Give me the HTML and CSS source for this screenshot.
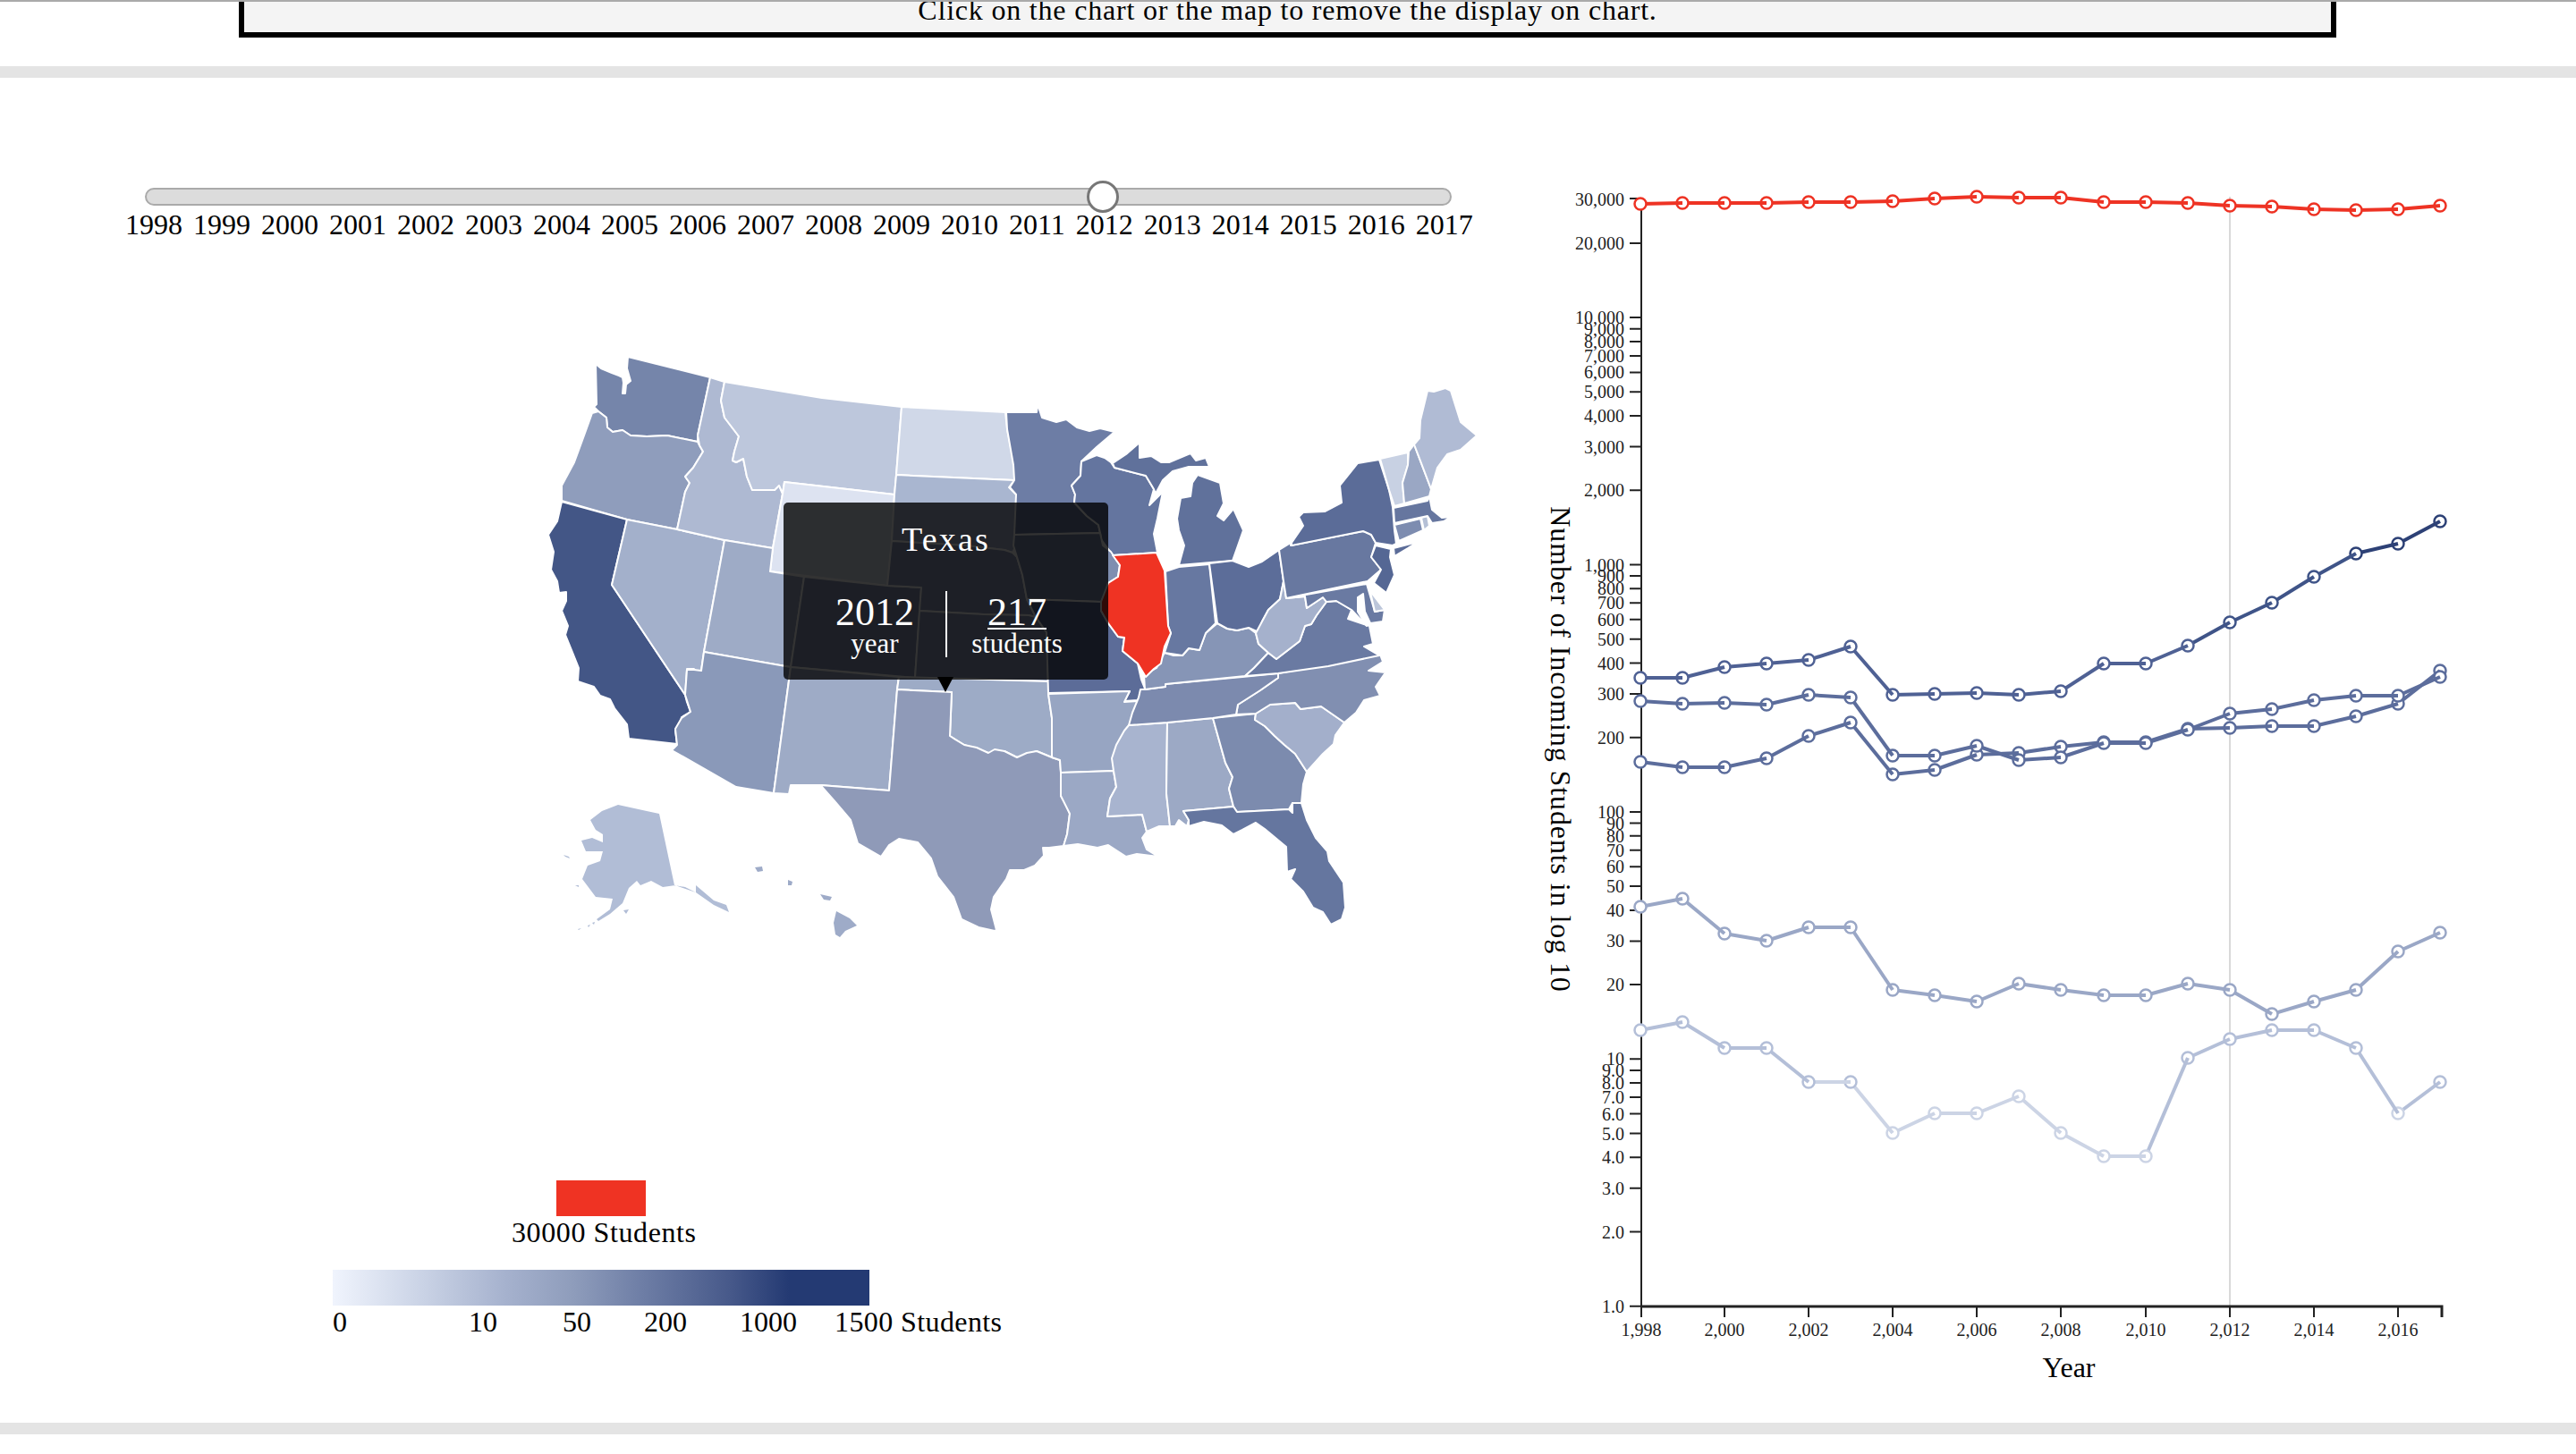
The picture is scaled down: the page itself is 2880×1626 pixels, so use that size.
FILE: index.html
```html
<!DOCTYPE html>
<html lang="en">
<head>
<meta charset="utf-8">
<title>Incoming Students</title>
<link rel="stylesheet" href="styles.css">
</head>
<body>
<div class="top-rule"></div>
<div class="notice"><p class="notice-text">Click on the chart or the map to remove the display on chart.</p></div>
<div class="band band-first"></div>
<main class="main">
  <section class="left">
    <input class="slider" type="range" min="1998" max="2017" step="0.01" value="2012.05" aria-label="Year">
    <div class="years">
      <span>1998</span><span>1999</span><span>2000</span><span>2001</span><span>2002</span><span>2003</span><span>2004</span><span>2005</span><span>2006</span><span>2007</span><span>2008</span><span>2009</span><span>2010</span><span>2011</span><span>2012</span><span>2013</span><span>2014</span><span>2015</span><span>2016</span><span>2017</span>
    </div>
    <div class="map-wrap">
      <svg class="map" viewBox="600 380 1060 700" width="1060" height="700">
        <path class="wa" d="M666 407L672 412L684 417L692 420L696 422L697 428L696 440L699 440L700 430L705 426L701 412L702 399L794 422L780 487L780 494L746 487L723 488L705 487L696 481L685 483L679 478L678 467L669 460L664 455L667 452Z"/>
        <path class="or" d="M662 462L669 460L678 467L679 478L685 483L696 481L705 487L723 488L746 487L780 494L782 498L786 505L775 523L766 533L771 540L766 550L757 592L701 581L628 560L628 543L642 517L653 487Z"/>
        <path class="ca" d="M628 561L701 581L684 654L766 777L768 785L772 796L762 802L760 813L755 817L757 832L703 826L701 810L687 792L682 782L671 778L664 768L646 762L647 747L639 727L632 710L635 700L628 683L633 672L633 662L625 663L623 650L616 637L619 617L613 598L623 583Z"/>
        <path class="nv" d="M701 581L757 592L810 604L787 729L784 750L780 753L776 748L768 748L766 777L684 654Z"/>
        <path class="id" d="M794 422L810 427L806 448L810 467L826 488L821 505L819 515L823 517L831 513L835 533L841 548L866 548L871 543L875 552L864 613L810 604L757 592L766 550L771 540L766 533L775 523L786 505L782 498L780 487Z"/>
        <path class="mt" d="M810 427L919 445L1008 455L1002 531L1000 553L877 539L875 552L871 543L866 548L841 548L835 533L831 513L823 517L819 515L821 505L826 488L810 467L806 448Z"/>
        <path class="wy" d="M877 539L1000 553L997 605L992 655L861 639L864 613L875 552Z"/>
        <path class="ut" d="M810 604L864 613L861 639L899 645L884 746L787 729Z"/>
        <path class="co" d="M899 645L992 655L1030 657L1023 758L884 746Z"/>
        <path class="az" d="M787 729L884 746L865 887L823 880L751 839L757 833L755 815L762 803L772 796L766 777L768 749L776 749L784 750Z"/>
        <path class="nm" d="M884 746L1005 757L1003 771L994 884L918 878L884 878L882 888L865 887Z"/>
        <path class="nd" d="M1008 455L1124 461L1126 480L1134 520L1134 537L1002 531Z"/>
        <path class="sd" d="M1002 531L1134 537L1128 545L1136 553L1136 597L1134 600L1136 610L1132 618L1123 615L1080 610L997 605L1000 553Z"/>
        <path class="ne" d="M997 605L1080 610L1123 615L1132 618L1137 623L1143 643L1148 670L1158 690L1150 688L1100 687L1028 683L1030 657L992 655Z"/>
        <path class="ks" d="M1028 683L1100 687L1150 688L1158 690L1170 707L1172 762L1023 758Z"/>
        <path class="ok" d="M1005 757L1172 762L1172 775L1176 803L1176 847L1159 840L1137 847L1123 840L1105 842L1078 833L1062 823L1064 774L1003 771Z"/>
        <path class="tx" d="M1003 771L1064 774L1062 823L1068 827L1078 833L1092 836L1105 842L1112 838L1123 840L1137 847L1148 842L1159 840L1176 847L1185 850L1186 864L1186 890L1192 900L1196 910L1193 933L1189 946L1173 948L1166 948L1167 957L1157 968L1145 973L1129 973L1125 983L1111 1003L1108 1017L1114 1040L1112 1041L1094 1037L1075 1028L1066 1003L1048 980L1041 960L1026 942L1005 938L994 945L985 958L959 943L951 917L934 897L919 880L917 878L994 884Z"/>
        <path class="mn" d="M1125 461L1159 461L1160 452L1165 467L1181 472L1192 469L1204 478L1218 482L1230 479L1246 483L1226 500L1209 516L1208 532L1198 543L1202 553L1201 562L1215 577L1228 587L1230 596L1134 598L1136 553L1129 545L1134 537L1133 520L1126 480Z"/>
        <path class="wi" d="M1209 516L1226 509L1235 512L1242 517L1246 523L1281 532L1290 547L1285 565L1300 550L1294 580L1290 597L1294 618L1244 621L1231 603L1230 596L1228 587L1215 577L1201 562L1202 553L1198 543L1208 532Z"/>
        <path class="mi" d="M1244 518L1259 508L1274 495L1274 512L1287 510L1298 517L1307 517L1331 507L1337 515L1348 512L1352 522L1329 522L1311 527L1300 537L1292 552L1290 547L1281 532L1246 523Z"/>
        <path class="mi" d="M1339 531L1364 540L1368 563L1361 577L1368 582L1379 569L1390 593L1383 613L1378 627L1318 632L1324 610L1318 593L1316 580L1320 557L1331 555L1333 540Z"/>
        <path class="ia" d="M1134 598L1230 596L1233 610L1242 617L1252 632L1250 645L1239 652L1236 662L1231 673L1148 670L1143 643L1137 623L1133 610Z"/>
        <path class="mo" d="M1148 670L1231 673L1231 683L1239 697L1250 712L1257 713L1255 728L1272 742L1276 760L1280 770L1272 783L1257 784L1263 773L1172 775L1170 707L1158 690Z"/>
        <path class="ar" d="M1172 776L1263 773L1257 785L1272 784L1263 810L1250 832L1244 848L1248 862L1186 864L1185 850L1176 847L1176 803Z"/>
        <path class="la" d="M1186 864L1245 862L1248 880L1241 893L1238 913L1277 911L1282 930L1277 937L1282 950L1295 958L1271 955L1259 958L1239 945L1227 948L1205 944L1189 946L1193 933L1196 910L1186 890Z"/>
        <path class="ms" d="M1262 811L1305 808L1304 887L1308 924L1296 924L1282 930L1277 911L1238 913L1241 893L1248 880L1245 862L1243 848L1248 833L1257 817Z"/>
        <path class="al" d="M1305 808L1356 803L1370 853L1378 869L1374 882L1379 902L1323 907L1329 917L1327 924L1318 917L1314 924L1308 924L1304 887Z"/>
        <path class="ga" d="M1356 803L1404 798L1403 805L1414 812L1425 823L1436 833L1448 843L1461 863L1457 877L1455 898L1445 898L1441 905L1383 908L1379 902L1374 882L1378 869L1370 853Z"/>
        <path class="fl" d="M1323 907L1379 902L1383 908L1441 905L1445 909L1445 898L1455 898L1461 917L1471 937L1484 952L1486 963L1502 987L1504 1015L1500 1028L1488 1034L1479 1020L1468 1015L1457 997L1443 983L1448 972L1439 975L1438 947L1414 927L1404 920L1389 928L1379 933L1366 923L1346 919L1329 924L1329 917Z"/>
        <path class="sc" d="M1404 798L1420 788L1448 786L1454 793L1477 790L1503 808L1493 822L1491 832L1479 843L1461 863L1448 843L1436 833L1425 823L1414 812L1403 805Z"/>
        <path class="nc" d="M1429 753L1543 732L1546 740L1530 750L1549 752L1538 768L1543 778L1525 783L1516 797L1503 808L1477 790L1454 793L1448 786L1420 788L1404 798L1382 799L1384 788L1409 772L1429 758Z"/>
        <path class="tn" d="M1280 771L1303 768L1303 765L1389 757L1429 753L1429 758L1409 772L1384 788L1382 799L1356 803L1305 808L1262 811L1266 797L1273 780L1275 771Z"/>
        <path class="ky" d="M1279 755L1293 747L1298 737L1302 730L1312 733L1322 733L1329 725L1341 727L1348 708L1361 697L1372 703L1383 705L1396 702L1404 708L1407 720L1418 730L1402 747L1392 756L1303 765L1303 768L1280 771Z"/>
        <path class="in" d="M1303 639L1318 634L1352 631L1359 697L1348 708L1341 727L1329 725L1322 733L1302 730L1309 708L1306 700Z"/>
        <path class="oh" d="M1352 630L1378 627L1396 634L1411 628L1430 615L1435 650L1431 670L1418 682L1411 695L1407 707L1396 702L1383 705L1372 703L1361 697Z"/>
        <path class="va" d="M1392 756L1402 747L1418 730L1427 737L1440 727L1453 717L1459 700L1466 698L1472 688L1483 673L1494 672L1511 682L1507 692L1531 700L1535 720L1525 723L1542 733L1485 745L1429 753Z"/>
        <path class="wv" d="M1435 650L1438 669L1459 667L1461 680L1479 668L1483 673L1472 688L1466 698L1459 700L1453 717L1440 727L1427 737L1418 730L1407 720L1404 708L1411 695L1418 682L1431 670Z"/>
        <path class="md" d="M1438 669L1528 653L1537 684L1548 682L1546 695L1532 697L1526 684L1524 664L1518 668L1518 684L1528 700L1511 682L1494 672L1483 673L1479 668L1461 680L1459 667Z"/>
        <path class="de" d="M1530 653L1535 665L1548 682L1537 684Z"/>
        <path class="pa" d="M1443 610L1524 594L1533 598L1538 607L1533 623L1544 637L1529 650L1438 669L1435 650L1430 615L1443 607Z"/>
        <path class="ny" d="M1444 607L1457 588L1452 578L1457 573L1481 572L1500 562L1498 543L1518 518L1542 514L1553 548L1557 567L1559 593L1561 608L1557 610L1538 607L1533 598L1524 594L1444 610Z"/>
        <path class="ny" d="M1558 613L1585 606L1574 613L1559 622Z"/>
        <path class="nj" d="M1538 610L1555 614L1554 623L1559 643L1550 663L1536 652L1544 637L1533 623Z"/>
        <path class="ct" d="M1559 587L1588 580L1591 593L1564 605Z"/>
        <path class="ri" d="M1589 579L1596 577L1598 588L1592 593Z"/>
        <path class="ma" d="M1558 568L1596 560L1598 555L1601 570L1612 579L1622 578L1614 583L1601 585L1596 577L1559 585Z"/>
        <path class="vt" d="M1543 513L1574 506L1574 520L1568 540L1570 563L1559 566L1553 548Z"/>
        <path class="nh" d="M1575 505L1581 497L1600 547L1598 555L1570 563L1568 540L1574 520Z"/>
        <path class="me" d="M1581 497L1587 490L1588 470L1596 437L1603 438L1616 434L1622 437L1633 472L1651 487L1633 503L1618 508L1607 523L1600 547Z"/>
        <path class="il" d="M1244 621L1293 618L1302 638L1306 700L1309 708L1302 723L1298 742L1290 748L1281 757L1272 742L1255 728L1257 713L1250 712L1239 697L1231 683L1231 673L1239 652L1250 645L1252 632Z"/>
        <path class="ak" d="M660 917L673 907L691 900L723 907L737 910L754 990L766 992L778 998L778 990L798 1007L812 1012L815 1020L798 1012L778 998L755 990L741 992L728 985L716 990L712 985L703 993L696 1010L682 1022L669 1030L667 1028L682 1017L685 1005L666 1003L651 983L657 968L671 963L674 952L655 952L650 940L662 937L674 942L674 933L666 928Z"/>
        <path class="ak" d="M697 1018L703 1017L700 1022ZM662 1032L665 1031L664 1034ZM657 1035L660 1034L658 1037ZM646 1039L650 1038L647 1040ZM630 956L636 958L637 960L632 958ZM643 990L647 990L647 992Z"/>
        <path class="hi" d="M844 970L852 969L853 974L847 975Z"/>
        <path class="hi" d="M881 984L886 986L885 990L881 990Z"/>
        <path class="hi" d="M917 1000L930 1003L928 1007L921 1006Z"/>
        <path class="hi" d="M935 1019L950 1027L958 1035L945 1041L939 1048L934 1045L932 1032Z"/>
      </svg>
      <div class="tip">
        <div class="tip-title">Texas</div>
        <div class="tip-stats">
          <div class="stat"><div class="stat-num">2012</div><div class="stat-lab">year</div></div>
          <div class="tip-rule"></div>
          <div class="stat stat-right"><div class="stat-num stat-under">217</div><div class="stat-lab">students</div></div>
        </div>
      </div>
    </div>
    <div class="red-key"></div>
    <div class="red-label">30000 Students</div>
    <div class="grad-key"></div>
    <div class="grad-labels"><span>0</span><span class="t10">10</span><span class="t50">50</span><span class="t200">200</span><span class="t1000">1000</span><span class="t1500">1500 Students</span></div>
  </section>
  <section class="right">
    <svg class="chart" viewBox="1700 87 1180 1504" width="1180" height="1504">
      <path class="grid" d="M2493 220V1461"/>
      <path class="axis-y" d="M1822 222H1835V1461"/>
      <path class="axis-x" d="M1835 1461H2730V1473"/>
      <path class="ticks" d="M1822 1377.5h12M1822 1328.8h12M1822 1294.3h12M1822 1267.5h12M1822 1245.6h12M1822 1227.1h12M1822 1211.1h12M1822 1196.9h12M1822 1184.3h12M1822 1101.1h12M1822 1052.4h12M1822 1017.9h12M1822 991.1h12M1822 969.2h12M1822 950.7h12M1822 934.7h12M1822 920.5h12M1822 907.9h12M1822 824.7h12M1822 776h12M1822 741.5h12M1822 714.7h12M1822 692.8h12M1822 674.3h12M1822 658.3h12M1822 644.1h12M1822 631.5h12M1822 548.3h12M1822 499.6h12M1822 465.1h12M1822 438.3h12M1822 416.4h12M1822 397.9h12M1822 381.9h12M1822 367.7h12M1822 355.1h12M1822 271.9h12M1822 1460.7h12M1835 1461v12M1928 1461v12M2022 1461v12M2116 1461v12M2210 1461v12M2304 1461v12M2399 1461v12M2493 1461v12M2587 1461v12M2681 1461v12"/>
      <g class="ylabels">
        <text x="1816" y="1463">1.0</text><text x="1816" y="1380">2.0</text><text x="1816" y="1331">3.0</text><text x="1816" y="1296">4.0</text><text x="1816" y="1270">5.0</text><text x="1816" y="1248">6.0</text><text x="1816" y="1229">7.0</text><text x="1816" y="1213">8.0</text><text x="1816" y="1199">9.0</text><text x="1816" y="1186">10</text>
        <text x="1816" y="1103">20</text><text x="1816" y="1054">30</text><text x="1816" y="1020">40</text><text x="1816" y="993">50</text><text x="1816" y="971">60</text><text x="1816" y="953">70</text><text x="1816" y="937">80</text><text x="1816" y="923">90</text><text x="1816" y="910">100</text>
        <text x="1816" y="827">200</text><text x="1816" y="778">300</text><text x="1816" y="744">400</text><text x="1816" y="717">500</text><text x="1816" y="695">600</text><text x="1816" y="676">700</text><text x="1816" y="660">800</text><text x="1816" y="646">900</text><text x="1816" y="634">1,000</text>
        <text x="1816" y="550">2,000</text><text x="1816" y="502">3,000</text><text x="1816" y="467">4,000</text><text x="1816" y="440">5,000</text><text x="1816" y="418">6,000</text><text x="1816" y="400">7,000</text><text x="1816" y="384">8,000</text><text x="1816" y="370">9,000</text><text x="1816" y="357">10,000</text><text x="1816" y="274">20,000</text><text x="1816" y="225">30,000</text>
      </g>
      <g class="xlabels">
        <text x="1835" y="1494">1,998</text><text x="1928" y="1494">2,000</text><text x="2022" y="1494">2,002</text><text x="2116" y="1494">2,004</text><text x="2210" y="1494">2,006</text><text x="2304" y="1494">2,008</text><text x="2399" y="1494">2,010</text><text x="2493" y="1494">2,012</text><text x="2587" y="1494">2,014</text><text x="2681" y="1494">2,016</text>
      </g>
      <text class="axis-title" x="2313" y="1540">Year</text>
      <text class="axis-title axis-title-y" transform="translate(1734 838) rotate(90)">Number of Incoming Students in log 10</text>

      <g class="s-e">
        <circle cx="2728" cy="1210"/><path d="M2681 1245L2728 1210"/><circle class="lt" cx="2681" cy="1245"/><path d="M2634 1172L2681 1245"/><circle cx="2634" cy="1172"/><path d="M2587 1152L2634 1172"/><circle cx="2587" cy="1152"/><path d="M2540 1152L2587 1152"/><circle cx="2540" cy="1152"/><path d="M2493 1162L2540 1152"/><circle cx="2493" cy="1162"/><path d="M2446 1183L2493 1162"/><circle cx="2446" cy="1183"/><path d="M2399 1293L2446 1183"/><circle class="lt" cx="2399" cy="1293"/><path class="lt" d="M2352 1293L2399 1293"/><circle class="lt" cx="2352" cy="1293"/><path class="lt" d="M2304 1267L2352 1293"/><circle class="lt" cx="2304" cy="1267"/><path class="lt" d="M2257 1226L2304 1267"/><circle class="lt" cx="2257" cy="1226"/><path class="lt" d="M2210 1245L2257 1226"/><circle class="lt" cx="2210" cy="1245"/><path class="lt" d="M2163 1245L2210 1245"/><circle class="lt" cx="2163" cy="1245"/><path class="lt" d="M2116 1267L2163 1245"/><circle class="lt" cx="2116" cy="1267"/><path class="lt" d="M2069 1210L2116 1267"/><circle cx="2069" cy="1210"/><path class="lt" d="M2022 1210L2069 1210"/><circle cx="2022" cy="1210"/><path d="M1975 1172L2022 1210"/><circle cx="1975" cy="1172"/><path d="M1928 1172L1975 1172"/><circle cx="1928" cy="1172"/><path d="M1881 1143L1928 1172"/><circle cx="1881" cy="1143"/><path d="M1834 1152L1881 1143"/><circle cx="1834" cy="1152"/>
      </g>
      <g class="s-d">
        <circle cx="2728" cy="1043"/><path d="M2681 1064L2728 1043"/><circle cx="2681" cy="1064"/><path d="M2634 1107L2681 1064"/><circle cx="2634" cy="1107"/><path d="M2587 1120L2634 1107"/><circle cx="2587" cy="1120"/><path d="M2540 1134L2587 1120"/><circle cx="2540" cy="1134"/><path d="M2493 1107L2540 1134"/><circle cx="2493" cy="1107"/><path d="M2446 1100L2493 1107"/><circle cx="2446" cy="1100"/><path d="M2399 1113L2446 1100"/><circle cx="2399" cy="1113"/><path d="M2352 1113L2399 1113"/><circle cx="2352" cy="1113"/><path d="M2304 1107L2352 1113"/><circle cx="2304" cy="1107"/><path d="M2257 1100L2304 1107"/><circle cx="2257" cy="1100"/><path d="M2210 1120L2257 1100"/><circle cx="2210" cy="1120"/><path d="M2163 1113L2210 1120"/><circle cx="2163" cy="1113"/><path d="M2116 1107L2163 1113"/><circle cx="2116" cy="1107"/><path d="M2069 1037L2116 1107"/><circle cx="2069" cy="1037"/><path d="M2022 1037L2069 1037"/><circle cx="2022" cy="1037"/><path d="M1975 1052L2022 1037"/><circle cx="1975" cy="1052"/><path d="M1928 1044L1975 1052"/><circle cx="1928" cy="1044"/><path d="M1881 1005L1928 1044"/><circle cx="1881" cy="1005"/><path d="M1834 1014L1881 1005"/><circle cx="1834" cy="1014"/>
      </g>
      <g class="s-c">
        <circle cx="2728" cy="750"/><path d="M2681 787L2728 750"/><circle cx="2681" cy="787"/><path d="M2634 801L2681 787"/><circle cx="2634" cy="801"/><path d="M2587 812L2634 801"/><circle cx="2587" cy="812"/><path d="M2540 812L2587 812"/><circle cx="2540" cy="812"/><path d="M2493 814L2540 812"/><circle cx="2493" cy="814"/><path d="M2446 815L2493 814"/><circle cx="2446" cy="815"/><path d="M2399 830L2446 815"/><circle cx="2399" cy="830"/><path d="M2352 830L2399 830"/><circle cx="2352" cy="830"/><path d="M2304 835L2352 830"/><circle cx="2304" cy="835"/><path d="M2257 842L2304 835"/><circle cx="2257" cy="842"/><path d="M2210 844L2257 842"/><circle cx="2210" cy="844"/><path d="M2163 861L2210 844"/><circle cx="2163" cy="861"/><path d="M2116 866L2163 861"/><circle cx="2116" cy="866"/><path d="M2069 808L2116 866"/><circle cx="2069" cy="808"/><path d="M2022 823L2069 808"/><circle cx="2022" cy="823"/><path d="M1975 848L2022 823"/><circle cx="1975" cy="848"/><path d="M1928 858L1975 848"/><circle cx="1928" cy="858"/><path d="M1881 858L1928 858"/><circle cx="1881" cy="858"/><path d="M1834 852L1881 858"/><circle cx="1834" cy="852"/>
      </g>
      <g class="s-b">
        <circle cx="2728" cy="757"/><path d="M2681 778L2728 757"/><circle cx="2681" cy="778"/><path d="M2634 778L2681 778"/><circle cx="2634" cy="778"/><path d="M2587 783L2634 778"/><circle cx="2587" cy="783"/><path d="M2540 793L2587 783"/><circle cx="2540" cy="793"/><path d="M2493 798L2540 793"/><circle cx="2493" cy="798"/><path d="M2446 816L2493 798"/><circle cx="2446" cy="816"/><path d="M2399 831L2446 816"/><circle cx="2399" cy="831"/><path d="M2352 831L2399 831"/><circle cx="2352" cy="831"/><path d="M2304 847L2352 831"/><circle cx="2304" cy="847"/><path d="M2257 850L2304 847"/><circle cx="2257" cy="850"/><path d="M2210 834L2257 850"/><circle cx="2210" cy="834"/><path d="M2163 845L2210 834"/><circle cx="2163" cy="845"/><path d="M2116 845L2163 845"/><circle cx="2116" cy="845"/><path d="M2069 780L2116 845"/><circle cx="2069" cy="780"/><path d="M2022 777L2069 780"/><circle cx="2022" cy="777"/><path d="M1975 788L2022 777"/><circle cx="1975" cy="788"/><path d="M1928 786L1975 788"/><circle cx="1928" cy="786"/><path d="M1881 787L1928 786"/><circle cx="1881" cy="787"/><path d="M1834 784L1881 787"/><circle cx="1834" cy="784"/>
      </g>
      <g class="s-a">
        <g class="dk"><circle cx="2728" cy="583"/><path d="M2681 608L2728 583"/><circle cx="2681" cy="608"/><path d="M2634 619L2681 608"/><circle cx="2634" cy="619"/></g>
        <g class="md2"><path d="M2587 645L2634 619"/><circle cx="2587" cy="645"/><path d="M2540 674L2587 645"/><circle cx="2540" cy="674"/><path d="M2493 696L2540 674"/><circle cx="2493" cy="696"/><path d="M2446 722L2493 696"/></g>
        <circle cx="2446" cy="722"/><path d="M2399 742L2446 722"/><circle cx="2399" cy="742"/><path d="M2352 742L2399 742"/><circle cx="2352" cy="742"/><path d="M2304 773L2352 742"/><circle cx="2304" cy="773"/><path d="M2257 777L2304 773"/><circle cx="2257" cy="777"/><path d="M2210 775L2257 777"/><circle cx="2210" cy="775"/><path d="M2163 776L2210 775"/><circle cx="2163" cy="776"/><path d="M2116 777L2163 776"/><circle cx="2116" cy="777"/><path d="M2069 723L2116 777"/><circle cx="2069" cy="723"/><path d="M2022 738L2069 723"/><circle cx="2022" cy="738"/><path d="M1975 742L2022 738"/><circle cx="1975" cy="742"/><path d="M1928 746L1975 742"/><circle cx="1928" cy="746"/><path d="M1881 758L1928 746"/><circle cx="1881" cy="758"/><path d="M1834 758L1881 758"/><circle cx="1834" cy="758"/>
      </g>
      <g class="s-r">
        <circle cx="2728" cy="230"/><path d="M2681 234L2728 230"/><circle cx="2681" cy="234"/><path d="M2634 235L2681 234"/><circle cx="2634" cy="235"/><path d="M2587 234L2634 235"/><circle cx="2587" cy="234"/><path d="M2540 231L2587 234"/><circle cx="2540" cy="231"/><path d="M2493 230L2540 231"/><circle cx="2493" cy="230"/><path d="M2446 227L2493 230"/><circle cx="2446" cy="227"/><path d="M2399 226L2446 227"/><circle cx="2399" cy="226"/><path d="M2352 226L2399 226"/><circle cx="2352" cy="226"/><path d="M2304 221L2352 226"/><circle cx="2304" cy="221"/><path d="M2257 221L2304 221"/><circle cx="2257" cy="221"/><path d="M2210 220L2257 221"/><circle cx="2210" cy="220"/><path d="M2163 222L2210 220"/><circle cx="2163" cy="222"/><path d="M2116 225L2163 222"/><circle cx="2116" cy="225"/><path d="M2069 226L2116 225"/><circle cx="2069" cy="226"/><path d="M2022 226L2069 226"/><circle cx="2022" cy="226"/><path d="M1975 227L2022 226"/><circle cx="1975" cy="227"/><path d="M1928 227L1975 227"/><circle cx="1928" cy="227"/><path d="M1881 227L1928 227"/><circle cx="1881" cy="227"/><path d="M1834 228L1881 227"/><circle cx="1834" cy="228"/>
      </g>
    </svg>
  </section>
</main>
<div class="band"></div>
</body>
</html>
```

FILE: styles.css
```css
html, body {
  margin: 0;
  padding: 0;
  background: #fff;
  overflow: hidden;
}
body {
  width: 2880px;
  height: 1626px;
  font-family: "Liberation Serif", serif;
  font-size: 32px;
  color: #000;
}
.top-rule {
  height: 2px;
  background: #aaa;
}
.notice {
  width: 2345px;
  height: 40px;
  margin-left: 267px;
  box-sizing: border-box;
  border: 6px solid #000;
  border-top: 0;
  background: #f4f4f4;
  overflow: hidden;
}
.notice-text {
  margin: -9px 0 0;
  line-height: 36px;
  text-align: center;
  letter-spacing: 0.8px;
}
.band {
  height: 13px;
  background: #e4e4e4;
}
.band-first {
  margin-top: 32px;
}
.main {
  display: flex;
  height: 1504px;
}
.left {
  width: 1700px;
  flex: none;
}
.right {
  width: 1180px;
  flex: none;
}
.slider {
  display: block;
  -webkit-appearance: none;
  appearance: none;
  box-sizing: border-box;
  width: 1461px;
  height: 20px;
  margin: 123px 0 0 162px;
  padding: 0;
  background: #dcdcdc;
  border: 2px solid #aaa;
  border-radius: 10px;
  outline: none;
}
.slider::-webkit-slider-thumb {
  -webkit-appearance: none;
  appearance: none;
  box-sizing: border-box;
  width: 36px;
  height: 36px;
  border-radius: 50%;
  background: #fff;
  border: 3px solid #777;
}
.years {
  display: flex;
  justify-content: space-between;
  width: 1507px;
  margin: 3px 0 0 140px;
  line-height: 36px;
}
.map-wrap {
  position: relative;
  width: 1060px;
  height: 700px;
  margin: 111px 0 0 600px;
}
.map {
  display: block;
}
.map path {
  stroke: #fff;
  stroke-width: 2px;
  stroke-linejoin: round;
}
.wa { fill: #7585aa; }
.or { fill: #8f9dbc; }
.ca { fill: #435686; }
.nv { fill: #a3b0cb; }
.id { fill: #aeb9d2; }
.mt { fill: #bdc7dc; }
.wy { fill: #dde3f1; }
.ut { fill: #9eabc6; }
.az { fill: #8a99b9; }
.nm { fill: #9eabc6; }
.co { fill: #8a98b8; }
.nd { fill: #d0d8e8; }
.sd { fill: #a9b6d0; }
.ne { fill: #8f9dbc; }
.ks { fill: #8f9dbc; }
.ok { fill: #9dabc6; }
.tx { fill: #8f9ab8; }
.ar { fill: #97a5c2; }
.la { fill: #9ba8c5; }
.ms { fill: #a8b4cf; }
.al { fill: #9ca9c5; }
.ga { fill: #7c8bae; }
.fl { fill: #65769f; }
.sc { fill: #a3afcb; }
.nc { fill: #818fb1; }
.tn { fill: #7c8aae; }
.ky { fill: #8695b6; }
.va { fill: #6a7aa2; }
.wv { fill: #a5b1cc; }
.oh { fill: #5c6d99; }
.in { fill: #6778a1; }
.il { fill: #ef3323; }
.mi { fill: #60719b; }
.wi { fill: #64759f; }
.mn { fill: #6d7da5; }
.ia { fill: #7f8eb0; }
.mo { fill: #5c6c98; }
.pa { fill: #6878a0; }
.ny { fill: #5b6c98; }
.nj { fill: #556794; }
.ct { fill: #7d8cb0; }
.ri { fill: #b5c0d6; }
.ma { fill: #66769f; }
.vt { fill: #c8d1e3; }
.nh { fill: #9aa7c4; }
.me { fill: #b0bbd4; }
.md { fill: #6a7aa2; }
.de { fill: #bcc6da; }
.ak { fill: #b1bdd6; }
.map .ak, .map .hi { stroke: none; }
.hi { fill: #9eabc8; }
.tip {
  position: absolute;
  left: 276px;
  top: 182px;
  width: 363px;
  height: 198px;
  box-sizing: border-box;
  padding-top: 19px;
  background: rgba(0, 0, 0, 0.8);
  border-radius: 5px;
  color: #fff;
  text-align: center;
}
.tip::after {
  content: "";
  position: absolute;
  left: 172px;
  top: 195px;
  border-style: solid;
  border-width: 17px 9px 0;
  border-color: #000 transparent transparent;
}
.tip-title {
  font-size: 38px;
  line-height: 44px;
  letter-spacing: 2.2px;
}
.tip-stats {
  display: flex;
  align-items: flex-start;
  margin-top: 36px;
  padding-left: 23px;
}
.stat {
  width: 158px;
}
.stat-right {
  margin-left: -1px;
}
.stat-num {
  font-size: 44px;
  line-height: 48px;
}
.stat-under {
  text-decoration: underline;
  text-decoration-thickness: 2px;
  text-underline-offset: 3px;
}
.stat-lab {
  margin-top: -6px;
  font-size: 31px;
  line-height: 34px;
}
.tip-rule {
  width: 2px;
  height: 74px;
  background: #fff;
}
.red-key {
  width: 100px;
  height: 40px;
  margin: 240px 0 0 622px;
  background: #ef3323;
}
.red-label {
  margin: 0 0 0 572px;
  line-height: 36px;
  letter-spacing: 0.6px;
}
.grad-key {
  width: 600px;
  height: 40px;
  margin: 24px 0 0 372px;
  background: linear-gradient(to right, #f0f4fd 0%, #c9d2e5 17%, #a6b2ce 32%, #8e9cbb 45%, #6d7da5 58%, #47598a 74%, #243a73 85%, #243a73 100%);
}
.grad-labels {
  display: flex;
  margin: 0 0 0 372px;
  line-height: 36px;
  white-space: nowrap;
}
.t10 { margin-left: 136px; }
.t50 { margin-left: 73px; }
.t200 { margin-left: 59px; }
.t1000 { margin-left: 59px; }
.t1500 { margin-left: 42px; letter-spacing: 0.4px; }
.chart {
  display: block;
}
.chart text {
  font-family: "Liberation Serif", serif;
}
.grid {
  fill: none;
  stroke: #ccc;
  stroke-width: 1.5px;
}
.axis-y {
  fill: none;
  stroke: #222;
  stroke-width: 2px;
}
.axis-x {
  fill: none;
  stroke: #222;
  stroke-width: 3px;
}
.ticks {
  fill: none;
  stroke: #222;
  stroke-width: 2px;
}
.ylabels text {
  font-size: 20px;
  text-anchor: end;
  dominant-baseline: middle;
  fill: #222;
}
.xlabels text {
  font-size: 20px;
  text-anchor: middle;
  fill: #222;
}
.axis-title {
  font-size: 32px;
  text-anchor: middle;
}
.axis-title-y {
  letter-spacing: 0.9px;
}
.chart circle {
  r: 6.5px;
  fill: #fff;
  stroke-width: 2.5px;
}
.chart g path {
  fill: none;
  stroke-width: 4px;
}
.s-r { stroke: #ee3324; }
.s-a { stroke: #4f6194; }
.md2 { stroke: #3f5488; }
.dk { stroke: #2d4176; }
.s-b, .s-c { stroke: #5c6d9c; }
.s-d { stroke: #9aa7c6; }
.s-e { stroke: #b4bfd8; }
.s-e .lt { stroke: #ccd4e5; }
```
